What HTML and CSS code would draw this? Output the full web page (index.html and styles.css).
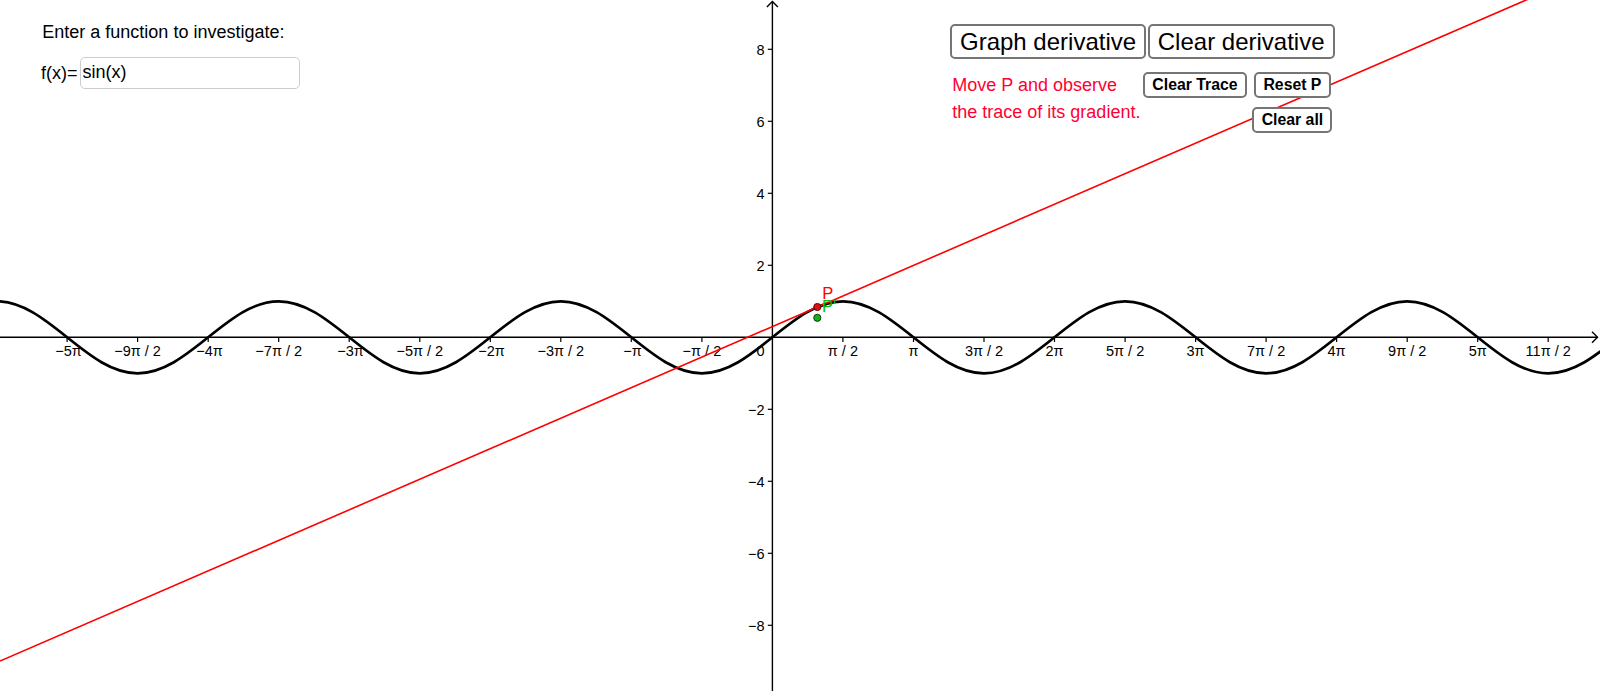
FILE: index.html
```html
<!DOCTYPE html>
<html lang="en">
<head>
<meta charset="utf-8">
<title>Gradient function explorer</title>
<link rel="stylesheet" href="styles.css">
</head>
<body>
<div class="stage">
  <svg class="graph" width="1600" height="691" viewBox="0 0 1600 691" xmlns="http://www.w3.org/2000/svg">
    <!-- axes -->
    <g class="axis">
      <line x1="0" y1="337.3" x2="1597.5" y2="337.3"/>
      <polyline points="1592,331.8 1597.5,337.3 1592,342.8"/>
      <line x1="772.4" y1="691" x2="772.4" y2="1.5"/>
      <polyline points="766.9,7 772.4,1.5 777.9,7"/>
    </g>
    <g class="tick">
      <line x1="67.1" y1="337.3" x2="67.1" y2="342"/>
      <line x1="137.6" y1="337.3" x2="137.6" y2="342"/>
      <line x1="208.2" y1="337.3" x2="208.2" y2="342"/>
      <line x1="278.7" y1="337.3" x2="278.7" y2="342"/>
      <line x1="349.2" y1="337.3" x2="349.2" y2="342"/>
      <line x1="419.8" y1="337.3" x2="419.8" y2="342"/>
      <line x1="490.3" y1="337.3" x2="490.3" y2="342"/>
      <line x1="560.8" y1="337.3" x2="560.8" y2="342"/>
      <line x1="631.3" y1="337.3" x2="631.3" y2="342"/>
      <line x1="701.9" y1="337.3" x2="701.9" y2="342"/>
      <line x1="842.9" y1="337.3" x2="842.9" y2="342"/>
      <line x1="913.5" y1="337.3" x2="913.5" y2="342"/>
      <line x1="984" y1="337.3" x2="984" y2="342"/>
      <line x1="1054.5" y1="337.3" x2="1054.5" y2="342"/>
      <line x1="1125.1" y1="337.3" x2="1125.1" y2="342"/>
      <line x1="1195.6" y1="337.3" x2="1195.6" y2="342"/>
      <line x1="1266.1" y1="337.3" x2="1266.1" y2="342"/>
      <line x1="1336.6" y1="337.3" x2="1336.6" y2="342"/>
      <line x1="1407.2" y1="337.3" x2="1407.2" y2="342"/>
      <line x1="1477.7" y1="337.3" x2="1477.7" y2="342"/>
      <line x1="1548.2" y1="337.3" x2="1548.2" y2="342"/>
      <line x1="767.8" y1="49.3" x2="772.4" y2="49.3"/>
      <line x1="767.8" y1="121.3" x2="772.4" y2="121.3"/>
      <line x1="767.8" y1="193.3" x2="772.4" y2="193.3"/>
      <line x1="767.8" y1="265.3" x2="772.4" y2="265.3"/>
      <line x1="767.8" y1="409.3" x2="772.4" y2="409.3"/>
      <line x1="767.8" y1="481.3" x2="772.4" y2="481.3"/>
      <line x1="767.8" y1="553.3" x2="772.4" y2="553.3"/>
      <line x1="767.8" y1="625.3" x2="772.4" y2="625.3"/>
    </g>
    <g class="xlabels">
      <text x="68.5" y="356">−5π</text>
      <text x="137.6" y="356">−9π / 2</text>
      <text x="209.5" y="356">−4π</text>
      <text x="278.7" y="356">−7π / 2</text>
      <text x="350.5" y="356">−3π</text>
      <text x="419.8" y="356">−5π / 2</text>
      <text x="491.5" y="356">−2π</text>
      <text x="560.8" y="356">−3π / 2</text>
      <text x="632.5" y="356">−π</text>
      <text x="701.9" y="356">−π / 2</text>
      <text x="842.9" y="356">π / 2</text>
      <text x="913.5" y="356">π</text>
      <text x="984" y="356">3π / 2</text>
      <text x="1054.5" y="356">2π</text>
      <text x="1125.1" y="356">5π / 2</text>
      <text x="1195.6" y="356">3π</text>
      <text x="1266.1" y="356">7π / 2</text>
      <text x="1336.6" y="356">4π</text>
      <text x="1407.2" y="356">9π / 2</text>
      <text x="1477.7" y="356">5π</text>
      <text x="1548.2" y="356">11π / 2</text>
    </g>
    <g class="ylabels">
      <text x="764.5" y="356">0</text>
      <text x="764.5" y="54.6">8</text>
      <text x="764.5" y="126.6">6</text>
      <text x="764.5" y="198.6">4</text>
      <text x="764.5" y="270.6">2</text>
      <text x="764.5" y="414.6">−2</text>
      <text x="764.5" y="486.6">−4</text>
      <text x="764.5" y="558.6">−6</text>
      <text x="764.5" y="630.6">−8</text>
    </g>
    <!-- f(x) = sin(x), drawn in graph units -->
    <g transform="matrix(44.9 0 0 -36 772.4 337.3)">
      <path class="curve" vector-effect="non-scaling-stroke" d="M-18.849556,0
        c0.512287,0.512287 1.002314,1 1.570796,1 c0.568482,0 1.058509,-0.487713 1.570796,-1 c0.512287,-0.512287 1.002314,-1 1.570796,-1 c0.568482,0 1.058509,0.487713 1.570796,1
        c0.512287,0.512287 1.002314,1 1.570796,1 c0.568482,0 1.058509,-0.487713 1.570796,-1 c0.512287,-0.512287 1.002314,-1 1.570796,-1 c0.568482,0 1.058509,0.487713 1.570796,1
        c0.512287,0.512287 1.002314,1 1.570796,1 c0.568482,0 1.058509,-0.487713 1.570796,-1 c0.512287,-0.512287 1.002314,-1 1.570796,-1 c0.568482,0 1.058509,0.487713 1.570796,1
        c0.512287,0.512287 1.002314,1 1.570796,1 c0.568482,0 1.058509,-0.487713 1.570796,-1 c0.512287,-0.512287 1.002314,-1 1.570796,-1 c0.568482,0 1.058509,0.487713 1.570796,1
        c0.512287,0.512287 1.002314,1 1.570796,1 c0.568482,0 1.058509,-0.487713 1.570796,-1 c0.512287,-0.512287 1.002314,-1 1.570796,-1 c0.568482,0 1.058509,0.487713 1.570796,1
        c0.512287,0.512287 1.002314,1 1.570796,1 c0.568482,0 1.058509,-0.487713 1.570796,-1 c0.512287,-0.512287 1.002314,-1 1.570796,-1 c0.568482,0 1.058509,0.487713 1.570796,1"/>
    </g>
    <!-- tangent at P -->
    <line class="tangent" x1="0" y1="661.1" x2="1600" y2="-32"/>
    <!-- points -->
    <circle class="pt-red" cx="817.3" cy="307" r="3.6"/>
    <circle class="pt-green" cx="817.3" cy="317.8" r="3.6"/>
    <text class="lbl-red" x="822.3" y="298.5">P</text>
    <text class="lbl-green" x="822" y="311.5">P'</text>
  </svg>

  <div class="intro">
    <p class="intro-title">Enter a function to investigate:</p>
    <div class="input-row">
      <label class="fx-label" for="fx">f(x)=</label>
      <input id="fx" class="fx-input" type="text" value="sin(x)">
    </div>
  </div>

  <div class="panel">
    <div class="big-row">
      <button class="btn btn-big" type="button">Graph derivative</button>
      <button class="btn btn-big" type="button">Clear derivative</button>
    </div>
    <div class="lower">
      <p class="hint">Move P and observe<br>the trace of its gradient.</p>
      <div class="small-btns">
        <button class="btn btn-small" type="button">Clear Trace</button>
        <button class="btn btn-small" type="button">Reset P</button>
        <button class="btn btn-small btn-clear-all" type="button">Clear all</button>
      </div>
    </div>
  </div>
</div>
</body>
</html>
```

FILE: styles.css
```css
html, body {
  margin: 0;
  padding: 0;
  background: #ffffff;
}

body {
  font-family: "Liberation Sans", Arial, sans-serif;
  color: #000000;
  width: 1600px;
  height: 691px;
  overflow: hidden;
}

.stage {
  position: relative;
  width: 1600px;
  height: 691px;
  overflow: hidden;
}

.graph {
  display: block;
}

.axis line,
.axis polyline {
  stroke: #000000;
  stroke-width: 1.4;
  fill: none;
}

.tick line {
  stroke: #000000;
  stroke-width: 1.2;
}

.xlabels text,
.ylabels text {
  font-family: "Liberation Sans", Arial, sans-serif;
  font-size: 14.5px;
  fill: #000000;
}

.xlabels text {
  text-anchor: middle;
}

.ylabels text {
  text-anchor: end;
}

.curve {
  fill: none;
  stroke: #000000;
  stroke-width: 2.7;
  stroke-linejoin: round;
}

.tangent {
  stroke: #ff0000;
  stroke-width: 1.6;
}

.pt-red {
  fill: #e01010;
  stroke: #4a0000;
  stroke-width: 0.9;
}

.pt-green {
  fill: #14b014;
  stroke: #003800;
  stroke-width: 0.9;
}

.lbl-red,
.lbl-green {
  font-family: "Liberation Sans", Arial, sans-serif;
  font-size: 16.5px;
}

.lbl-red {
  fill: #ff0000;
}

.lbl-green {
  fill: #00c000;
}

/* input widget (top left) */
.intro {
  position: absolute;
  left: 41px;
  top: 21.5px;
}

.intro-title {
  margin: 0;
  padding-left: 1.3px;
  font-size: 18px;
  line-height: 20px;
}

.input-row {
  display: flex;
  align-items: center;
  margin-top: 15.2px;
}

.fx-label {
  font-size: 18px;
  line-height: 20px;
}

.fx-input {
  box-sizing: border-box;
  margin: 0 0 0 2px;
  width: 220px;
  height: 32.3px;
  padding: 0 0 0 2px;
  border: 1px solid #cccccc;
  border-radius: 5px;
  background: #ffffff;
  font-family: "Liberation Sans", Arial, sans-serif;
  font-size: 18px;
  color: #000000;
  outline: none;
}

/* buttons panel (top right) */
.panel {
  position: absolute;
  left: 950px;
  top: 24.3px;
}

.big-row {
  display: flex;
  gap: 1.7px;
}

.btn {
  box-sizing: border-box;
  margin: 0;
  background: #ffffff;
  border: 2px solid #757575;
  border-radius: 5px;
  color: #000000;
  font-family: "Liberation Sans", Arial, sans-serif;
  white-space: nowrap;
  cursor: pointer;
}

.btn-big {
  height: 34.7px;
  padding: 0 8px;
  font-size: 24px;
  line-height: 30px;
}

.lower {
  display: grid;
  grid-template-columns: 191px auto;
  align-items: start;
  margin-top: 12.7px;
}

.hint {
  margin: 0;
  padding-left: 2.3px;
  font-size: 18px;
  line-height: 27.3px;
  color: #ff0033;
  white-space: nowrap;
}

.small-btns {
  display: grid;
  grid-template-columns: auto auto;
  column-gap: 1.5px;
  row-gap: 9px;
  justify-items: center;
}

.btn-small {
  height: 26px;
  padding: 0 7.3px;
  font-size: 15.8px;
  font-weight: bold;
  line-height: 20px;
}

.btn-clear-all {
  grid-column: 2;
  height: 26.6px;
}
```
